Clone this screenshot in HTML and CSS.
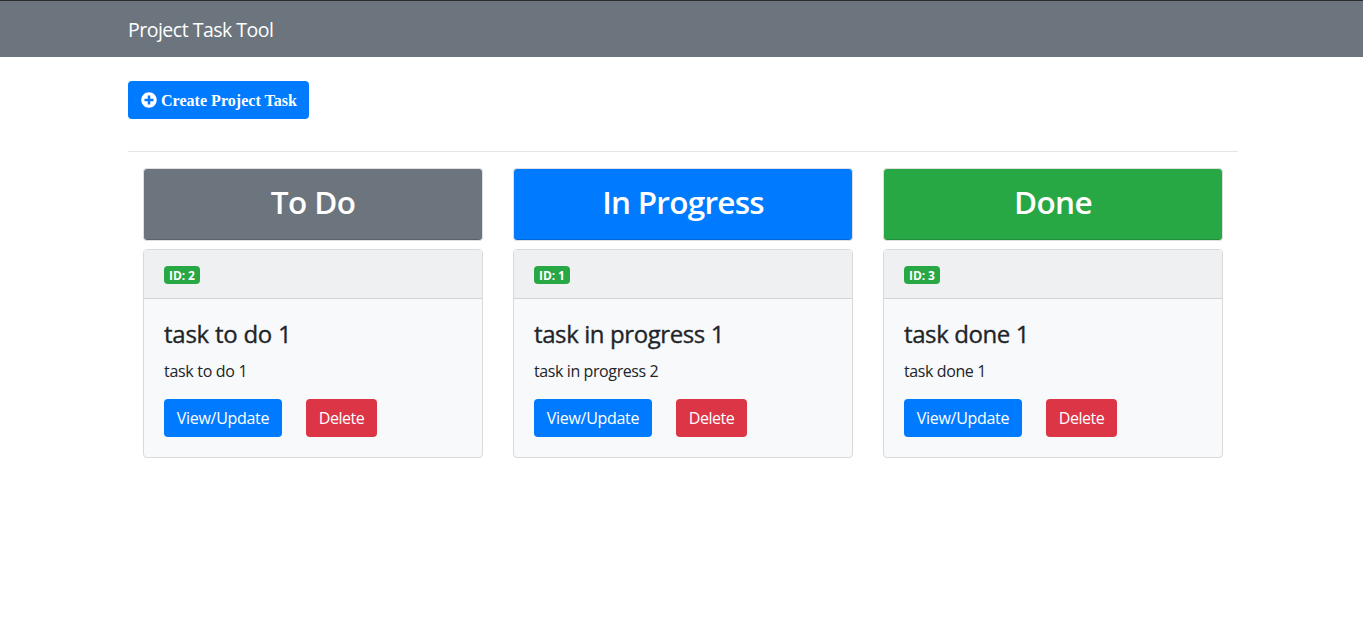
FILE: index.html
```html
<!DOCTYPE html>
<html lang="en">
<head>
<meta charset="utf-8">
<title>Project Task Tool</title>
<link rel="stylesheet" href="styles.css">
</head>
<body>
<nav class="navbar"><div class="container"><a class="brand">Project Task Tool</a></div></nav>
<main class="container">
<a class="btn btn-primary btn-create"><svg class="plus" viewBox="0 0 512 512" aria-hidden="true"><path fill="currentColor" d="M256 8C119 8 8 119 8 256s111 248 248 248 248-111 248-248S393 8 256 8zm144 276c0 6.600-5.400 12-12 12h-92v92c0 6.600-5.400 12-12 12h-56c-6.600 0-12-5.400-12-12v-92h-92c-6.600 0-12-5.400-12-12v-56c0-6.600 5.400-12 12-12h92v-92c0-6.600 5.400-12 12-12h56c6.600 0 12 5.400 12 12v92h92c6.600 0 12 5.400 12 12v56z"/></svg><span>Create Project Task</span></a>
<hr class="rule">
<div class="board">
<section class="column">
<div class="heading todo"><h3 class="title-todo">To Do</h3></div>
<article class="card"><div class="card-header"><span class="badge">ID: 2</span></div>
<div class="card-body"><h5 class="name name-todo">task to do 1</h5><p class="text">task to do 1</p><div class="actions"><a class="btn btn-primary view">View/Update</a><button class="btn btn-danger delete">Delete</button></div></div></article>
</section>
<section class="column">
<div class="heading progress"><h3 class="title-progress">In Progress</h3></div>
<article class="card"><div class="card-header"><span class="badge">ID: 1</span></div>
<div class="card-body"><h5 class="name">task in progress 1</h5><p class="text text-progress">task in progress 2</p><div class="actions"><a class="btn btn-primary view">View/Update</a><button class="btn btn-danger delete">Delete</button></div></div></article>
</section>
<section class="column">
<div class="heading done"><h3 class="title-done">Done</h3></div>
<article class="card"><div class="card-header"><span class="badge">ID: 3</span></div>
<div class="card-body"><h5 class="name">task done 1</h5><p class="text text-done">task done 1</p><div class="actions"><a class="btn btn-primary view">View/Update</a><button class="btn btn-danger delete">Delete</button></div></div></article>
</section>
</div>
</main>
</body>
</html>
```
FILE: styles.css
```css
*{box-sizing:border-box}
body{margin:0;background:#fff;color:#212529;font:400 16px/24px "Segoe UI","Open Sans","Noto Sans",sans-serif;letter-spacing:-.3px}
.container{width:1110px;margin-left:128px}
.navbar{height:57px;border-top:1px solid #292b2d;background:#6c757d;margin-bottom:24px;display:flex;align-items:center}
.brand{display:block;color:#fff;font-size:19.5px;line-height:30px;letter-spacing:-.5px;padding-top:2px}
.btn{display:inline-flex;align-items:center;justify-content:center;height:38px;padding:0;border:0;border-radius:4px;color:#fff;font:inherit;white-space:nowrap;letter-spacing:-.3px}
.btn-primary{background:#007bff}
.btn-danger{background:#dc3545}
.btn-create{width:181px;justify-content:flex-start;padding-left:13px;gap:4px;font:700 16px/24px "Liberation Serif",serif;letter-spacing:.03px}
.btn-create span{padding-top:2px}
.plus{width:16px;height:16px}
.rule{margin:32px 0 16px;border:0;border-top:1px solid #e5e5e5}
.board{display:grid;grid-template-columns:repeat(3,1fr)}
.column{padding:0 15px}
.heading{height:73px;border:1px solid #dfdfdf;border-radius:4px;margin-bottom:8px;color:#fff;text-align:center;padding-top:13px;box-shadow:inset 0 -1px rgba(0,0,0,.15)}
.todo{background:#6c757d}
.progress{background:#007bff}
.done{background:#28a745}
.heading h3{margin:0;font-size:31.5px;line-height:40px;font-weight:600;letter-spacing:-.6px}
.heading .title-progress{letter-spacing:-.75px}
.card{height:209px;border:1px solid #d9dadb;border-radius:4px;background:#f8f9fa}
.card-header{height:49px;padding:16px 20px;background:#eff0f2;border-bottom:1px solid #d2d3d4;display:flex}
.badge{width:36px;height:18px;border-radius:4px;background:#28a745;color:#fff;text-align:center;font-size:12px;font-weight:700;line-height:19px;letter-spacing:-.1px}
.card-body{padding:20px}
.name{margin:0 0 10px;font-size:24px;line-height:30px;font-weight:500;letter-spacing:-.4px;-webkit-text-stroke:.35px currentColor}
.name-todo{letter-spacing:-.25px}
.text{margin:0 0 16px}
.text-progress{letter-spacing:-.4px}
.text-done{letter-spacing:-.4px}
.actions{display:flex;gap:24px}
.view{width:118px}
.delete{width:71px;letter-spacing:-.5px}
```
